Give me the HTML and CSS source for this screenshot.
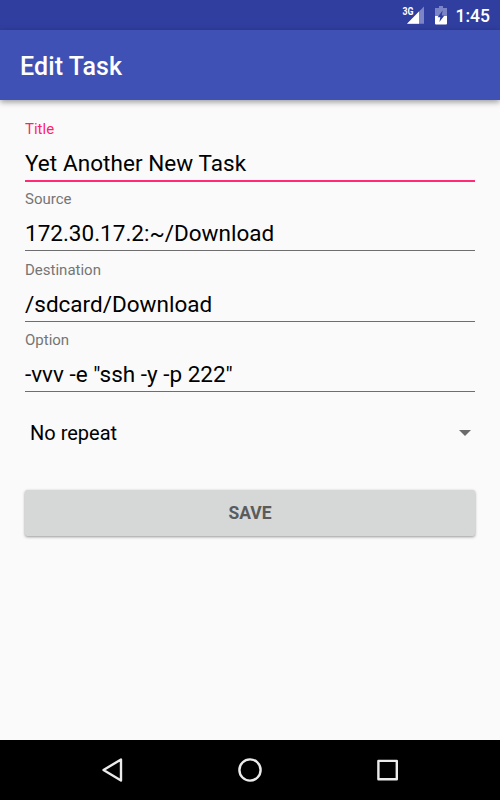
FILE: index.html
```html
<!DOCTYPE html>
<html lang="en">
<head>
    <meta charset="UTF-8">
    <meta name="viewport" content="width=device-width, initial-scale=1.0">
    <link rel="stylesheet" href="styles.css">
    <title>Edit Task</title>
</head>
<body>
    <div class="status-bar">
        <svg class="signal" width="24" height="20" viewBox="0 0 24 20">
            <path d="M24 1.5v17.3H7z" fill="#7a84c6"/>
            <path d="M19 6.5v12.3H7z" fill="#fff"/>
            <text class="network" x="2.5" y="9.5" textLength="11" lengthAdjust="spacingAndGlyphs">3G</text>
        </svg>
        <svg class="battery" width="12" height="19" viewBox="0 0 12 19">
            <path d="M4 0h4v2h4v8H0V2h4z" fill="#7a84c6"/>
            <path d="M0 10h12v7.5q0 1-1 1H1q-1 0-1-1z" fill="#fff"/>
            <path d="M7.6 4.5L2.6 11.2h2.7L4.4 16l5-6.6H6.8z" fill="#303f9f"/>
        </svg>
        <span class="clock">1:45</span>
    </div>
    <header class="toolbar">
        <h1>Edit Task</h1>
    </header>

    <main class="content">
        <div class="field focused">
            <div class="label">Title</div>
            <div class="value">Yet Another New Task</div>
        </div>
        <div class="field">
            <div class="label">Source</div>
            <div class="value">172.30.17.2:~/Download</div>
        </div>
        <div class="field">
            <div class="label">Destination</div>
            <div class="value">/sdcard/Download</div>
        </div>
        <div class="field">
            <div class="label">Option</div>
            <div class="value">-vvv -e "ssh -y -p 222"</div>
        </div>

        <div class="spinner">
            <span>No repeat</span>
            <svg width="12" height="6" viewBox="0 0 12 6"><path d="M0 0h12L6 6z" fill="#6b6b6b"/></svg>
        </div>

        <button class="save-button">SAVE</button>
    </main>

    <nav class="nav-bar">
        <svg width="26" height="26" viewBox="0 0 26 26"><path d="M21 2.5v21L3.5 13z"/></svg>
        <svg width="26" height="26" viewBox="0 0 26 26"><circle cx="13" cy="13" r="10.6"/></svg>
        <svg width="26" height="26" viewBox="0 0 26 26"><path d="M3.4 3.9h18.4v18.4H3.4z"/></svg>
    </nav>
</body>
</html>
```
FILE: styles.css
```css
body {
    margin: 0;
    height: 800px;
    display: flex;
    flex-direction: column;
    overflow: hidden;
    background: #fafafa;
    color: #000;
    font-family: Roboto, sans-serif;
}

.status-bar {
    height: 30px;
    box-sizing: border-box;
    padding-right: 10px;
    display: flex;
    align-items: center;
    justify-content: flex-end;
    background: #303f9f;
    color: #fff;
}
.signal {
    margin: 0 11px 0 0;
}
.network {
    font-size: 10px;
    font-weight: 700;
    fill: #fff;
}
.battery {
    margin-right: 9px;
}
.clock {
    font-size: 17.5px;
    font-weight: 500;
    line-height: 30px;
    padding-top: 2px;
}

.toolbar {
    height: 70px;
    box-sizing: border-box;
    padding: 1px 20px 0;
    display: flex;
    align-items: center;
    background: #3f51b5;
    color: #fff;
    box-shadow: 0 2px 6px rgba(0, 0, 0, 0.4);
}
.toolbar h1 {
    margin: 0;
    font-size: 25px;
    font-weight: 500;
    line-height: 70px;
    padding-top: 3px;
    letter-spacing: 0.1px;
}

.content {
    flex: 1;
    display: flex;
    flex-direction: column;
    padding: 19.6px 25px 0;
}
.field {
    height: 70.6px;
    box-sizing: border-box;
}
.label {
    font-size: 15px;
    line-height: 18px;
    color: #757575;
}
.value {
    height: 42.8px;
    box-sizing: border-box;
    padding-top: 10px;
    font-size: 22.5px;
    line-height: 30px;
    white-space: nowrap;
    border-bottom: 1px solid #6e6e6e;
}
.focused .label {
    color: #ff1f71;
}
.focused .value {
    height: 44.4px;
    border-bottom: 2px solid #ff2a78;
    letter-spacing: 0.06px;
}

.spinner {
    height: 60px;
    margin-top: 1.4px;
    padding: 0 4px 0 5px;
    display: flex;
    align-items: center;
    justify-content: space-between;
    font-size: 20px;
}

.save-button {
    height: 46px;
    margin-top: 26.6px;
    border: 0;
    border-radius: 2.5px;
    background: #d6d7d7;
    color: #5b5b5b;
    font-family: inherit;
    font-size: 17.5px;
    font-weight: 700;
    box-shadow: 0 1px 3px rgba(0, 0, 0, 0.4);
}

.nav-bar {
    height: 60px;
    display: flex;
    align-items: center;
    justify-content: center;
    gap: 111.5px;
    background: #000;
}
.nav-bar svg {
    fill: none;
    stroke: #ebebeb;
    stroke-width: 2.4;
    stroke-linejoin: round;
}
```
